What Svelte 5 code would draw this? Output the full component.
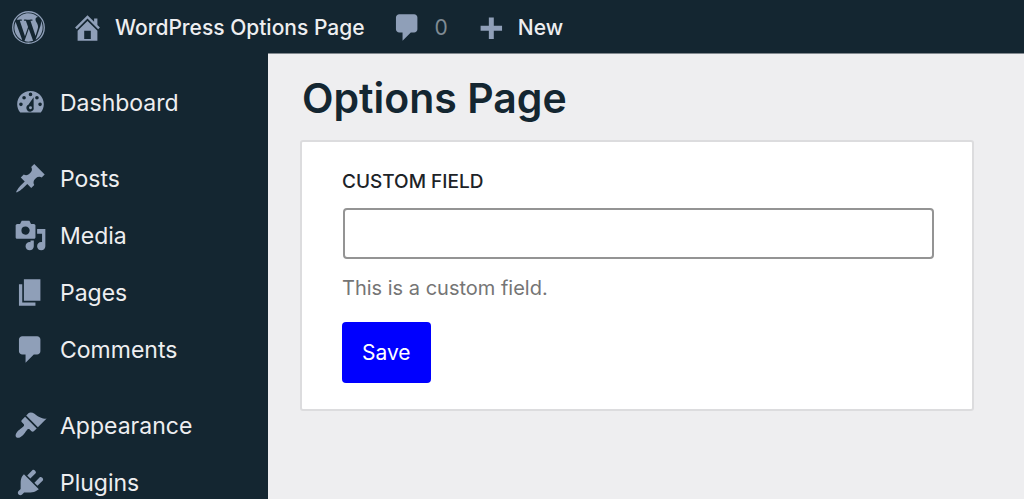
<script>
  // Icon paths are drawn on a 20x20 grid
  const icons = {
    home: 'M16 8.5l1.53 1.53-1.06 1.06L10 4.6l-6.47 6.49-1.06-1.06L10 2.5l4 4v-2h2v4zm-6-2.46l6 5.99V18H4v-5.97zM12 17v-5H8v5h4z',
    comment: 'M5 2h9q.82 0 1.41.59T16 4v7q0 .82-.59 1.41T14 13h-2l-5 5v-5H5q-.82 0-1.41-.59T3 11V4q0-.82.59-1.41T5 2z',
    plus: 'M17 9v3h-5v5H9v-5H4V9h5V4h3v5h5z',
    dashboard:
      'M3.76 16h12.48c1.14-1.35 1.83-3.1 1.83-5.01C18.07 6.58 14.48 3 10 3S1.93 6.58 1.93 10.99c0 1.91.69 3.66 1.83 5.01z' +
      'M10 4a1.1 1.1 0 1 0 0 2.2 1.1 1.1 0 0 0 0-2.2zM6.1 6a1.1 1.1 0 1 0 0 2.2 1.1 1.1 0 0 0 0-2.2zM13.9 6a1.1 1.1 0 1 0 0 2.2 1.1 1.1 0 0 0 0-2.2z' +
      'M4.2 10a1.1 1.1 0 1 0 0 2.2 1.1 1.1 0 0 0 0-2.2zM15.8 10a1.1 1.1 0 1 0 0 2.2 1.1 1.1 0 0 0 0-2.2z' +
      'M11.9 6.8l-3.2 4.6a2.2 2.2 0 1 0 3.2 1.5zM10 12.3a.9.9 0 1 0 0 1.8.9.9 0 0 0 0-1.8z',
    post: 'M10.44 3.02l1.82-1.82 6.36 6.35-1.83 1.82c-1.05-.68-2.48-.57-3.41.36l-.75.75c-.92.93-1.04 2.35-.35 3.41l-1.83 1.82-2.41-2.41-2.8 2.79c-.42.42-3.38 2.71-3.8 2.29s1.86-3.39 2.28-3.81l2.79-2.79L4.1 9.36l1.83-1.82c1.05.69 2.48.57 3.4-.36l.75-.75c.93-.92 1.05-2.35.36-3.41z',
    media:
      'M13 11V4c0-.55-.45-1-1-1h-1.67l-1-2H4.67l-1 2H2c-.55 0-1 .45-1 1v7c0 .55.45 1 1 1h10c.55 0 1-.45 1-1zM7 4.5a2.5 2.5 0 1 1 0 5 2.5 2.5 0 0 1 0-5z' +
      'M14 6h5v10.5c0 1.38-1.12 2.5-2.5 2.5S14 17.88 14 16.5s1.12-2.5 2.5-2.5c.17 0 .34.02.5.05V9h-3V6z' +
      'M10 14.05V13h2v3.5c0 1.38-1.12 2.5-2.5 2.5S7 17.88 7 16.5 8.12 14 9.5 14c.17 0 .34.02.5.05z',
    page: 'M6 15V2h10v13H6zM5 16h8v2H3V5h2v11z',
    appearance:
      'M14.48 11.06L7.41 3.99l1.5-1.5c.5-.56 2.3-.47 3.51.32 1.21.8 1.43 1.28 2.91 2.1 1.18.64 2.45 1.26 4.45.85z' +
      'M13.77 11.77L6.7 4.7 4.77 6.63c-.39.39-.39 1.02 0 1.41l1.06 1.06c.39.39.39 1.03 0 1.42-.6.6-1.43 1.11-2.21 1.69-.35.26-.7.53-1.01.84C1.43 14.23.4 16.08 1.4 17.07c.99 1 2.84-.03 4.18-1.36.31-.31.58-.66.85-1.02.57-.78 1.08-1.61 1.69-2.21.39-.39 1.02-.39 1.41 0l1.06 1.06c.39.39 1.02.39 1.41 0z',
    plugin:
      'M13.11 4.36L9.87 7.6 8 5.73l3.24-3.24c.35-.34 1.05-.2 1.56.32.52.51.66 1.21.31 1.55z' +
      'M5.11 6.13l.91-1.12 9.01 9.01-1.19.84c-.71.71-2.63 1.16-3.82 1.16H6.14L4.9 17.26c-.59.59-1.54.59-2.12 0-.59-.58-.59-1.53 0-2.12l1.24-1.24v-3.88c0-1.13.4-3.19 1.09-3.89z' +
      'M12.37 10.1l3.24-3.24c.34-.35 1.04-.21 1.55.31.52.51.66 1.21.31 1.55l-3.24 3.25z',
  };

  // Each inner list is one block of the menu, blocks are set apart by a gap
  const menu = [
    [{ label: 'Dashboard', icon: 'dashboard' }],
    [
      { label: 'Posts', icon: 'post' },
      { label: 'Media', icon: 'media' },
      { label: 'Pages', icon: 'page' },
      { label: 'Comments', icon: 'comment' },
    ],
    [
      { label: 'Appearance', icon: 'appearance' },
      { label: 'Plugins', icon: 'plugin' },
    ],
  ];

  let customField = $state('');
</script>

{#snippet icon(name)}
  <svg class="icon" viewBox="0 0 20 20" aria-hidden="true">
    <path fill-rule="evenodd" d={icons[name]} />
  </svg>
{/snippet}

<div class="admin">
  <header class="toolbar">
    <a href="#about" class="logo" aria-label="About WordPress">
      <svg class="icon" viewBox="0 0 122.52 122.52" aria-hidden="true">
        <path d="M8.708 61.26c0 20.802 12.089 38.779 29.619 47.298l-25.069-68.686c-2.916 6.536-4.55 13.769-4.55 21.388z" />
        <path d="M96.74 58.608c0-6.495-2.333-10.993-4.334-14.494-2.664-4.329-5.161-7.995-5.161-12.324 0-4.831 3.664-9.328 8.825-9.328.233 0 .454.029.681.042-9.35-8.566-21.807-13.796-35.489-13.796-18.36 0-34.513 9.42-43.91 23.688 1.233.037 2.395.063 3.382.063 5.497 0 14.006-.667 14.006-.667 2.833-.167 3.167 3.994.337 4.329 0 0-2.847.335-6.015.501l19.138 56.925 11.501-34.493-8.188-22.434c-2.83-.166-5.511-.501-5.511-.501-2.832-.166-2.5-4.496.332-4.329 0 0 8.679.667 13.843.667 5.496 0 14.006-.667 14.006-.667 2.835-.167 3.168 3.994.337 4.329 0 0-2.853.335-6.015.501l18.992 56.494 5.242-17.517c2.272-7.269 4.001-12.49 4.001-16.989z" />
        <path d="M62.184 65.857l-15.768 45.819c4.708 1.384 9.687 2.141 14.846 2.141 6.12 0 11.989-1.058 17.452-2.979-.141-.225-.269-.464-.374-.724z" />
        <path d="M107.376 36.046c.226 1.674.354 3.471.354 5.404 0 5.333-.996 11.328-3.996 18.824l-16.053 46.413c15.624-9.111 26.133-26.038 26.133-45.426 0-9.137-2.333-17.729-6.438-25.215z" />
        <circle class="ring" cx="61.26" cy="61.26" r="58.5" />
      </svg>
    </a>
    <a href="#site">{@render icon('home')}WordPress Options Page</a>
    <a href="#comments" class="count" aria-label="0 comments">{@render icon('comment')}<span>0</span></a>
    <a href="#new">{@render icon('plus')}New</a>
  </header>

  <div class="body">
    <nav class="sidebar">
      {#each menu as group}
        <ul>
          {#each group as item}
            <li><a href="#{item.label.toLowerCase()}">{@render icon(item.icon)}{item.label}</a></li>
          {/each}
        </ul>
      {/each}
    </nav>

    <main>
      <h1>Options Page</h1>
      <form class="card" onsubmit={(e) => e.preventDefault()}>
        <label for="custom-field">Custom Field</label>
        <input id="custom-field" type="text" bind:value={customField} aria-describedby="custom-field-help" />
        <p id="custom-field-help">This is a custom field.</p>
        <button type="submit">Save</button>
      </form>
    </main>
  </div>
</div>

<style>
  :global(body) {
    background: #eeeef0;
  }

  .admin {
    display: flex;
    flex-direction: column;
    height: 100vh;
    font-family: Inter, 'Liberation Sans', sans-serif;
    font-size: 21px;
  }

  .admin * {
    box-sizing: border-box;
  }

  a {
    display: flex;
    align-items: center;
    color: #eeeef0;
    text-decoration: none;
  }

  .icon {
    flex: none;
    width: 33px;
    height: 33px;
    fill: #8f9fb8;
  }

  .ring {
    fill: none;
    stroke: #8f9fb8;
    stroke-width: 5;
  }

  .toolbar {
    display: flex;
    flex: none;
    gap: 26px;
    height: 53px;
    padding: 2px 12px 0;
    background: #142631;
    font-weight: 500;
  }

  .toolbar a {
    gap: 11px;
  }

  .toolbar .count {
    color: #7f8b93;
    font-weight: 400;
  }

  .body {
    display: flex;
    flex: 1;
    min-height: 0;
  }

  .sidebar {
    flex: none;
    width: 268px;
    padding-top: 21px;
    overflow: hidden;
    background: #142631;
    font-size: 23px;
  }

  ul {
    margin: 0 0 19px;
    padding: 0;
    list-style: none;
  }

  .sidebar a {
    gap: 13px;
    height: 57px;
    padding-left: 14px;
  }

  main {
    flex: 1;
    padding: 19px 50px 0 32px;
    border-top: 1px solid #82898f;
  }

  h1 {
    margin: 0 0 17px 2px;
    color: #142631;
    font-size: 41px;
    font-weight: 600;
    line-height: 50px;
  }

  .card {
    padding: 26px 38px 26px 40px;
    border: 2px solid #dcdcde;
    border-radius: 3px;
    background: #fff;
  }

  label {
    display: block;
    margin-bottom: 12px;
    color: #1d2327;
    font-size: 19px;
    font-weight: 500;
    line-height: 28px;
    text-transform: uppercase;
  }

  input {
    display: block;
    width: calc(100% - 1px);
    height: 51px;
    margin-left: 1px;
    padding: 0 12px;
    border: 2px solid #949494;
    border-radius: 4px;
    background: #fff;
    font: inherit;
  }

  p {
    margin: 14px 0 19px;
    color: #757575;
    font-size: 20px;
    line-height: 30px;
  }

  button {
    display: block;
    height: 61px;
    padding: 0 20px;
    border: 0;
    border-radius: 4px;
    background: #00f;
    color: #fff;
    font: inherit;
    font-size: 21px;
  }
</style>
